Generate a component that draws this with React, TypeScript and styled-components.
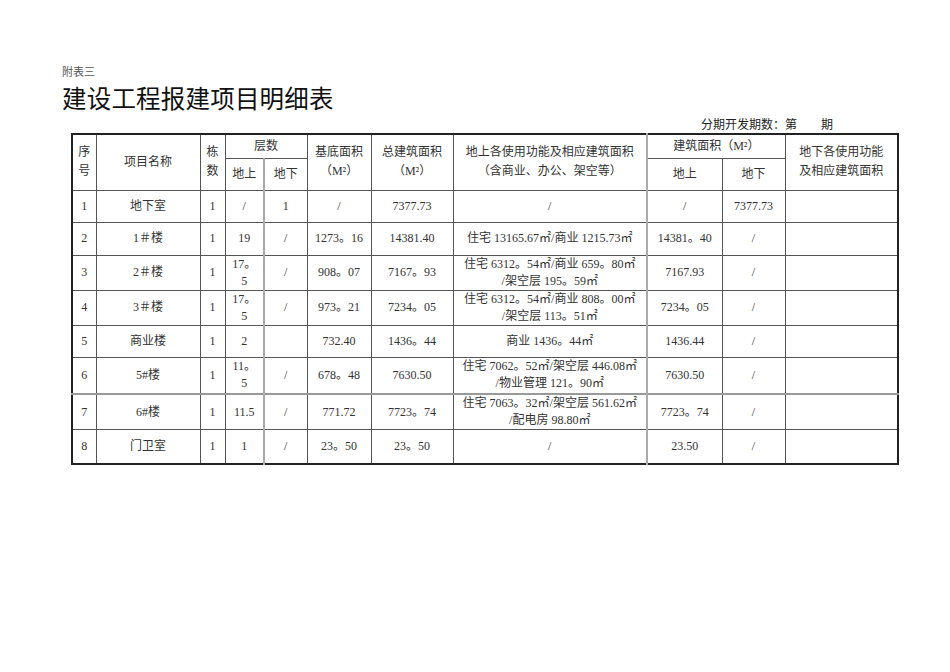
import styled, { createGlobalStyle } from "styled-components";

const GlobalStyle = createGlobalStyle`
  html, body {
    margin: 0;
    padding: 0;
    background: #fff;
  }
  body {
    font-family: "Liberation Serif", "Noto Sans CJK SC", serif;
    color: #222;
  }
`;

const Page = styled.div`
  width: 950px;
  height: 672px;
  padding: 63px 0 0 62px;
  box-sizing: border-box;
`;

const Note = styled.div`
  font-family: "Noto Sans CJK SC", sans-serif;
  font-size: 11px;
  line-height: 16px;
  color: #555;
`;

const Title = styled.h1`
  margin: 2px 0 0;
  font-family: "Noto Sans CJK SC", sans-serif;
  font-weight: 400;
  font-size: 24.5px;
  line-height: 34px;
  color: #111;
  letter-spacing: 0.2px;
`;

const Stage = styled.div`
  width: 771px;
  margin-top: 2px;
  text-align: right;
  font-size: 12px;
  line-height: 16px;
  color: #222;
`;

const Table = styled.table`
  margin: 0 0 0 9px;
  width: 826px;
  table-layout: fixed;
  border-collapse: collapse;
  border: 2px solid #222;
  font-size: 12px;
  color: #333;
`;

const Row = styled.tr<{ $h: number; $thickTop?: boolean }>`
  height: ${(p) => p.$h}px;
  & > td {
    border-top: ${(p) => (p.$thickTop ? "2px solid #999" : "1px solid #555")};
  }
`;

const Cell = styled.td<{ $soft?: boolean }>`
  padding: 0 2px;
  text-align: center;
  vertical-align: middle;
  line-height: 17px;
  border: 1px solid #555;
  ${(p) => (p.$soft ? "border-right: 2px solid #aaa;" : "")}
`;

const HeadCell = styled(Cell)`
  line-height: 19px;
`;

interface Item {
  no: string;
  name: string;
  count: string;
  up: React.ReactNode;
  down: string;
  base: string;
  total: string;
  uses: React.ReactNode;
  areaUp: string;
  areaDown: string;
  h: number;
  thickTop?: boolean;
}

const items: Item[] = [
  { no: "1", name: "地下室", count: "1", up: "/", down: "1", base: "/", total: "7377.73", uses: "/", areaUp: "/", areaDown: "7377.73", h: 32 },
  { no: "2", name: "1＃楼", count: "1", up: "19", down: "/", base: "1273。16", total: "14381.40", uses: "住宅 13165.67㎡/商业 1215.73㎡", areaUp: "14381。40", areaDown: "/", h: 33 },
  { no: "3", name: "2＃楼", count: "1", up: <>17。<br />5</>, down: "/", base: "908。07", total: "7167。93", uses: <>住宅 6312。54㎡/商业 659。80㎡<br />/架空层 195。59㎡</>, areaUp: "7167.93", areaDown: "/", h: 35 },
  { no: "4", name: "3＃楼", count: "1", up: <>17。<br />5</>, down: "/", base: "973。21", total: "7234。05", uses: <>住宅 6312。54㎡/商业 808。00㎡<br />/架空层 113。51㎡</>, areaUp: "7234。05", areaDown: "/", h: 35 },
  { no: "5", name: "商业楼", count: "1", up: "2", down: "", base: "732.40", total: "1436。44", uses: "商业 1436。44㎡", areaUp: "1436.44", areaDown: "/", h: 32 },
  { no: "6", name: "5#楼", count: "1", up: <>11。<br />5</>, down: "/", base: "678。48", total: "7630.50", uses: <>住宅 7062。52㎡/架空层 446.08㎡<br />/物业管理 121。90㎡</>, areaUp: "7630.50", areaDown: "/", h: 37 },
  { no: "7", name: "6#楼", count: "1", up: "11.5", down: "/", base: "771.72", total: "7723。74", uses: <>住宅 7063。32㎡/架空层 561.62㎡<br />/配电房 98.80㎡</>, areaUp: "7723。74", areaDown: "/", h: 35, thickTop: true },
  { no: "8", name: "门卫室", count: "1", up: "1", down: "/", base: "23。50", total: "23。50", uses: "/", areaUp: "23.50", areaDown: "/", h: 34 },
];

const widths = [24, 104, 25, 39, 43, 64, 82, 194, 75, 63, 113];

export default function App() {
  return (
    <Page>
      <GlobalStyle />
      <Note>附表三</Note>
      <Title>建设工程报建项目明细表</Title>
      <Stage>分期开发期数：第&emsp;&emsp;期</Stage>
      <Table>
        <colgroup>
          {widths.map((w, i) => (
            <col key={i} style={{ width: w }} />
          ))}
        </colgroup>
        <tbody>
          <Row $h={24}>
            <HeadCell rowSpan={2}>序<br />号</HeadCell>
            <HeadCell rowSpan={2}>项目名称</HeadCell>
            <HeadCell rowSpan={2}>栋<br />数</HeadCell>
            <HeadCell colSpan={2}>层数</HeadCell>
            <HeadCell rowSpan={2}>基底面积<br />（M²）</HeadCell>
            <HeadCell rowSpan={2}>总建筑面积<br />（M²）</HeadCell>
            <HeadCell rowSpan={2} $soft>地上各使用功能及相应建筑面积<br />（含商业、办公、架空等）</HeadCell>
            <HeadCell colSpan={2}>建筑面积（M²）</HeadCell>
            <HeadCell rowSpan={2}>地下各使用功能<br />及相应建筑面积</HeadCell>
          </Row>
          <Row $h={32}>
            <HeadCell $soft>地上</HeadCell>
            <HeadCell>地下</HeadCell>
            <HeadCell>地上</HeadCell>
            <HeadCell>地下</HeadCell>
          </Row>
          {items.map((it) => (
            <Row key={it.no} $h={it.h} $thickTop={it.thickTop}>
              <Cell>{it.no}</Cell>
              <Cell>{it.name}</Cell>
              <Cell>{it.count}</Cell>
              <Cell $soft>{it.up}</Cell>
              <Cell>{it.down}</Cell>
              <Cell>{it.base}</Cell>
              <Cell>{it.total}</Cell>
              <Cell $soft>{it.uses}</Cell>
              <Cell>{it.areaUp}</Cell>
              <Cell>{it.areaDown}</Cell>
              <Cell></Cell>
            </Row>
          ))}
        </tbody>
      </Table>
    </Page>
  );
}
